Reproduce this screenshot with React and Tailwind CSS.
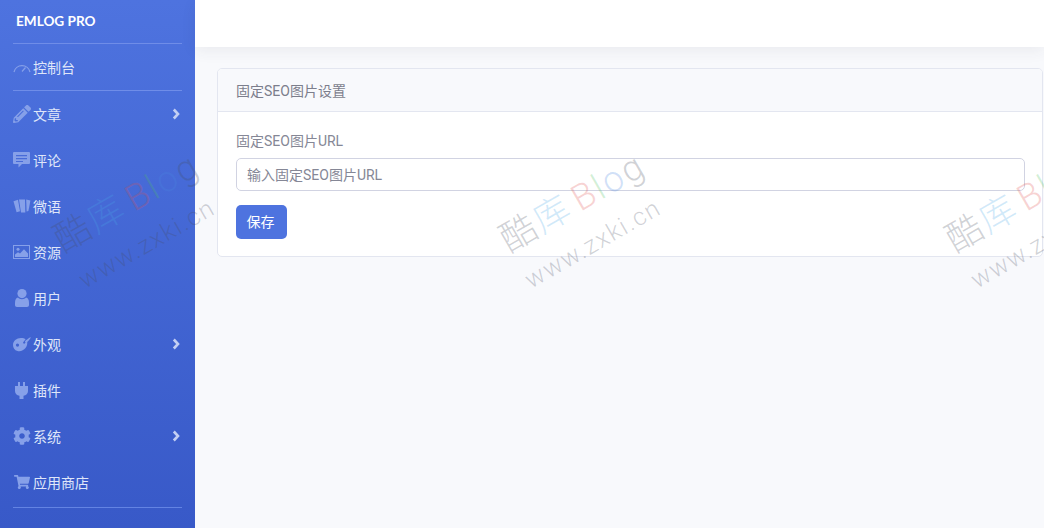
import { FaPencilAlt, FaCog, FaShoppingCart } from 'react-icons/fa';

const font = "font-['Roboto','Noto_Sans_CJK_SC',sans-serif]";

function GaugeIcon() {
  return (
    <svg viewBox="0 0 18 12" width="18" height="12" fill="none" stroke="currentColor" strokeWidth="1.2">
      <path d="M1 11a8.2 8.2 0 0 1 16 0" />
      <path d="M9 10.5 12.5 6.5" />
    </svg>
  );
}

function CommentIcon() {
  return (
    <svg viewBox="0 0 17 16" width="17" height="16" fill="currentColor">
      <path fillRule="evenodd" d="M1 0h15a1 1 0 0 1 1 1v10a1 1 0 0 1-1 1H9l-3.5 3.6V12H1a1 1 0 0 1-1-1V1a1 1 0 0 1 1-1ZM3 3v1.2h11V3H3Zm0 3v1.2h11V6H3Zm0 3v1h7V9H3Z" />
    </svg>
  );
}

function CardsIcon() {
  return (
    <svg viewBox="0 0 18 18" width="18" height="18" fill="currentColor">
      <path d="M.5 4.2 5 2.8 7 14.2 3.6 15.2Z" />
      <path d="M6 2.6 12 2.4 12.3 15.4 8 15.6Z" />
      <path d="M13.2 2.6 17.4 3.6 15.4 14 13.6 14.4Z" />
    </svg>
  );
}

function ImageIcon() {
  return (
    <svg viewBox="0 0 17 14" width="17" height="14" fill="currentColor">
      <path fillRule="evenodd" d="M0 0h17v14H0V0Zm1 1v12h15V1H1Z" />
      <circle cx="5" cy="4.2" r="1.5" />
      <path d="M2 12V9.6l3-2.4 2 1.4 4-4.4 4 4.4V12Z" />
    </svg>
  );
}

function UserIcon() {
  return (
    <svg viewBox="0 0 14 18" width="14" height="18" fill="currentColor">
      <circle cx="7" cy="4.6" r="4.6" />
      <path d="M3 8.6c1 1 2.4 1.6 4 1.6s3-.6 4-1.6c2 .4 3 2.4 3 5.4v2c0 1-.8 2-2 2H2c-1.2 0-2-1-2-2v-2c0-3 1-5 3-5.4Z" />
    </svg>
  );
}

function PaletteIcon() {
  return (
    <svg viewBox="0 0 18 15" width="18" height="15" fill="currentColor">
      <path fillRule="evenodd" d="M8 1c2 0 3.6.5 4.6 1.2L10 5.5l1 1.4 3-2.6c.6 1.4.4 4.4-1.5 6.7C10.6 13.4 7.5 14.8 4.5 14c-3-.8-4.5-3-4.500-6C0 4 3.5 1 8 1ZM4.5 6.5a1.6 1.6 0 1 0 0 3.2 1.6 1.6 0 0 0 0-3.2Z" />
      <path d="M17.6.4c.4.4-2.4 3.800-4.600 5.600l-1.200-1.300C13.700 2.700 17.200 0 17.600.4Z" />
    </svg>
  );
}

function PlugIcon() {
  return (
    <svg viewBox="0 0 13 17" width="13" height="17" fill="currentColor">
      <path d="M3 0h2v5H3ZM8 0h2v5H8Z" />
      <path d="M0 4h13v5c0 2.6-1.8 4.300-4.500 4.800V17h-4v-3.200C1.800 13.300 0 11.600 0 9Z" />
    </svg>
  );
}

function Chevron() {
  return (
    <svg viewBox="0 0 8 12" width="8" height="12" fill="none" stroke="currentColor" strokeWidth="2.6">
      <path d="M1.8 1.5 6 6l-4.2 4.5" />
    </svg>
  );
}

const menu = [
  { label: '文章', icon: <FaPencilAlt size={18} />, arrow: true },
  { label: '评论', icon: <CommentIcon /> },
  { label: '微语', icon: <CardsIcon /> },
  { label: '资源', icon: <ImageIcon /> },
  { label: '用户', icon: <UserIcon /> },
  { label: '外观', icon: <PaletteIcon />, arrow: true },
  { label: '插件', icon: <PlugIcon /> },
  { label: '系统', icon: <FaCog size={18} />, arrow: true },
  { label: '应用商店', icon: <FaShoppingCart size={16} /> },
];

function NavItem({ label, icon, arrow }) {
  return (
    <div className="h-[46px] flex items-center pl-[12px] pr-[15px] text-[14px] text-[#dfe6f9]">
      <span className="w-[21px] flex justify-center text-[#86a0e9] shrink-0 -ml-[1px] mr-[1px]">{icon}</span>
      <span className="flex-1 pt-[2px]">{label}</span>
      {arrow && <span className="text-[#c3cff3]"><Chevron /></span>}
    </div>
  );
}

function Watermark({ className }) {
  return (
    <div className={`absolute top-[169px] w-[190px] h-[120px] rotate-[-30deg] pointer-events-none select-none font-light ${className}`}>
      <div className="flex items-baseline gap-[8px] text-[36px] leading-[42px] whitespace-nowrap">
        <span className="text-[#454b5c]/25">酷</span>
        <span className="text-[#4aa8e8]/25 -ml-[6px]">库</span>
        <span className="text-[#e04f4f]/25">B</span>
        <span className="text-[#4fc060]/25 -ml-[6px]">l</span>
        <span className="text-[#4a86e0]/25 -ml-[6px]">o</span>
        <span className="text-[#454b5c]/25 -ml-[6px]">g</span>
      </div>
      <div className="text-[25px] leading-[30px] text-[#454b5c]/25 whitespace-nowrap mt-[10px] ml-[1px] tracking-[1.5px]">www.zxki.cn</div>
    </div>
  );
}

export default function App() {
  return (
    <div className={`relative h-[528px] w-full flex overflow-hidden bg-[#f8f9fc] ${font}`}>
      {/* Sidebar */}
      <aside className="w-[195px] shrink-0 bg-gradient-to-b from-[#4e73df] to-[#3859c8] flex flex-col">
        <div className="h-[43px] flex items-center pl-[16px] pb-[1px] text-[13.6px] font-bold font-['Lato'] text-white">EMLOG PRO</div>
        <div className="mx-[13px] border-t border-[#6f8de8]" />
        <div className="h-[46px] flex items-center pl-[12px] text-[14px] text-[#dfe6f9]">
          <span className="w-[21px] flex justify-center text-[#86a0e9] shrink-0 -ml-[1px] mr-[1px]"><GaugeIcon /></span>
          <span className="pt-[2px]">控制台</span>
        </div>
        <div className="mx-[13px] border-t border-[#6f8de8]" />
        {menu.map((item) => (
          <NavItem key={item.label} {...item} />
        ))}
        <div className="mt-[2px] mx-[13px] border-t border-[#6383e3]" />
      </aside>

      {/* Main */}
      <main className="flex-1 min-w-0 flex flex-col">
        <div className="h-[47px] shrink-0 bg-white shadow-[0_4px_14px_rgba(58,59,69,0.07)]" />
        <div className="pt-[21px] pl-[22px] pr-[1px]">
          <div className="bg-white border border-[#e3e6f0] rounded-[5px] overflow-hidden">
            <div className="h-[43px] flex items-center px-[18px] pt-[2px] bg-[#f8f9fc] border-b border-[#e3e6f0] text-[14px] text-[#7c7e8c]">
              固定SEO图片设置
            </div>
            <div className="pt-[19px] pb-[17px] pl-[18px] pr-[17px]">
              <label className="block text-[14px] leading-[21px] text-[#858796]">固定SEO图片URL</label>
              <input
                readOnly
                placeholder="输入固定SEO图片URL"
                className="block mt-[6px] w-full h-[33px] px-[10px] text-[14px] bg-transparent border border-[#d1d3e2] rounded-[5px] outline-none placeholder:text-[#858796]"
              />
              <button className="block mt-[14px] w-[51px] h-[34px] pr-[2px] bg-[#4e73df] rounded-[5px] text-[14px] text-white">保存</button>
            </div>
          </div>
        </div>
      </main>

      {/* Watermark */}
      <Watermark className="left-[64px]" />
      <Watermark className="left-[510px]" />
      <Watermark className="left-[956px]" />
    </div>
  );
}
